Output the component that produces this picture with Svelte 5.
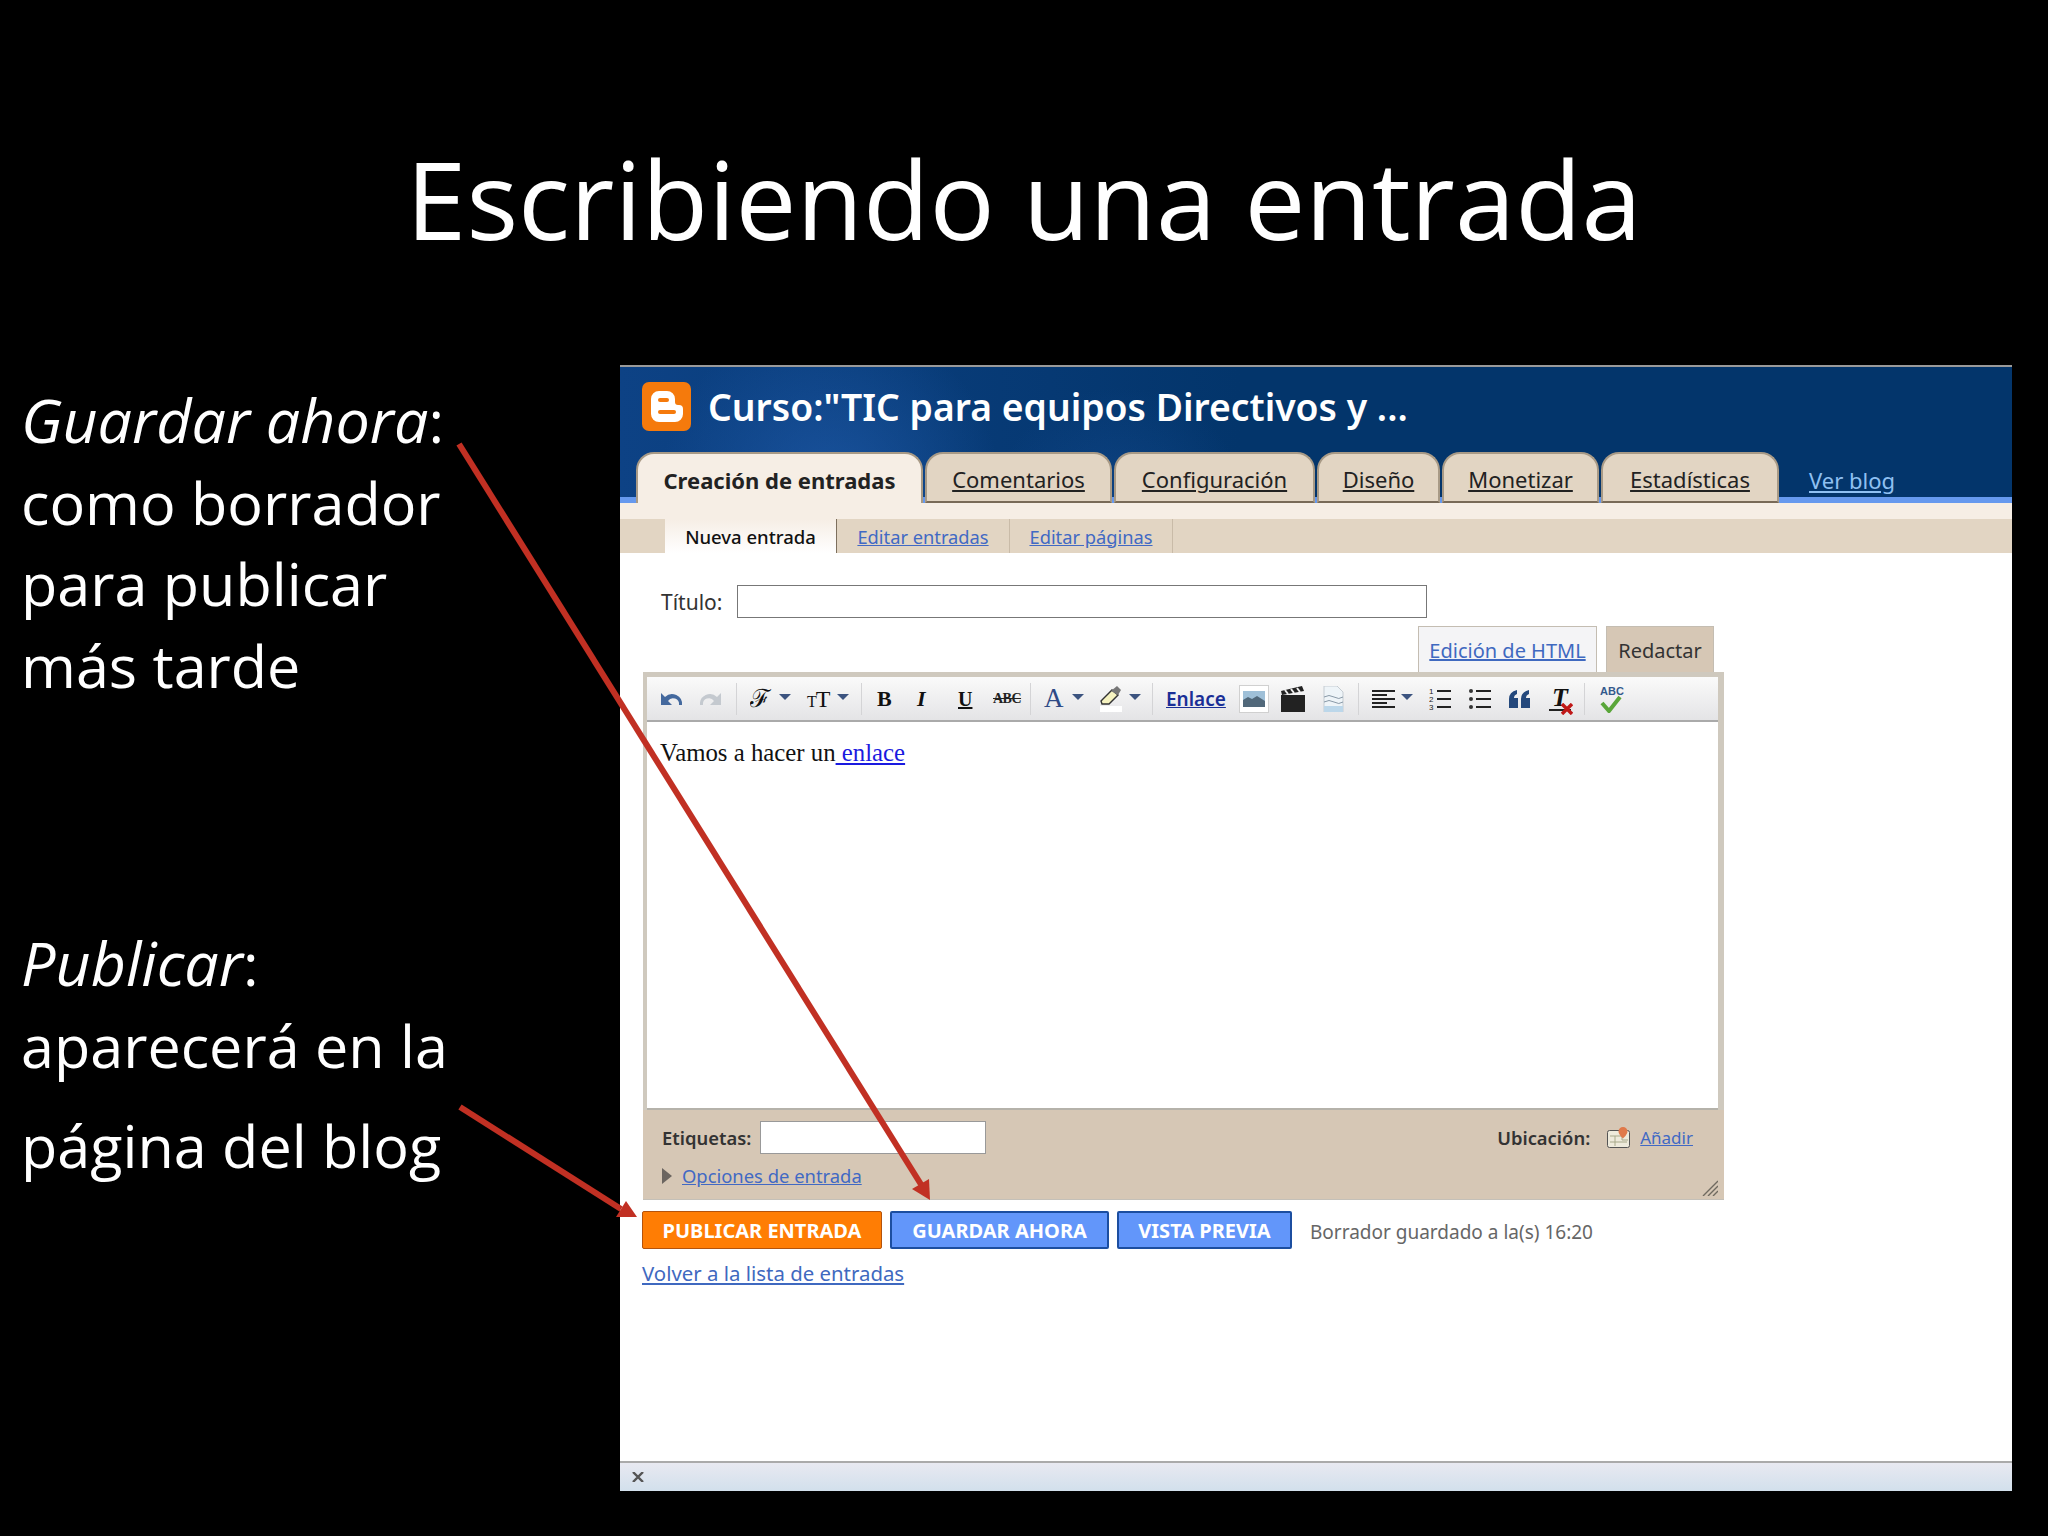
<script>
  const tabs = [
    { label: 'Comentarios', cls: 't-com' },
    { label: 'Configuración', cls: 't-conf' },
    { label: 'Diseño', cls: 't-dis' },
    { label: 'Monetizar', cls: 't-mon' },
    { label: 'Estadísticas', cls: 't-est' }
  ]
</script>

<div class="slide">
  <h1>Escribiendo una entrada</h1>

  <div class="main">
    <div class="notes">
      <p class="note"><em>Guardar ahora</em>:<br />como borrador<br />para publicar<br />más tarde</p>
      <p class="note second"><em>Publicar</em>:<br />aparecerá en la<br /><span class="last">página del blog</span></p>
    </div>

    <div class="window">
      <header class="head">
        <div class="brand">
          <svg class="logo" viewBox="0 0 49 49">
            <rect width="49" height="49" rx="7" fill="#f57a0c" />
            <path d="M17 9h8a8 8 0 0 1 8 8v3a3 3 0 0 0 3 3h1a4 4 0 0 1 4 4v5a8 8 0 0 1-8 8H17a8 8 0 0 1-8-8V17a8 8 0 0 1 8-8z" fill="#fff" />
            <rect x="16" y="16" width="11" height="4" rx="2" fill="#f57a0c" />
            <rect x="16" y="28" width="18" height="4" rx="2" fill="#f57a0c" />
          </svg>
          <span class="blog-name">Curso:"TIC para equipos Directivos y ...</span>
        </div>
        <nav class="tabs">
          <span class="tab active">Creación de entradas</span>
          {#each tabs as t}
            <a class="tab {t.cls}" href="#top">{t.label}</a>
          {/each}
          <a class="view" href="#top">Ver blog</a>
        </nav>
      </header>

      <div class="band"></div>
      <div class="subnav">
        <span class="sub current">Nueva entrada</span>
        <span class="sub s-ent"><a href="#top">Editar entradas</a></span>
        <span class="sub s-pag"><a href="#top">Editar páginas</a></span>
      </div>

      <div class="content">
        <div class="title-row">
          <label for="titulo">Título:</label>
          <input id="titulo" type="text" />
        </div>

        <div class="mode-row">
          <span class="mode html"><a href="#top">Edición de HTML</a></span>
          <span class="mode compose">Redactar</span>
        </div>

        <div class="editor">
          <div class="toolbar">
            <svg class="ic undo" viewBox="0 0 23 14"><path d="M1 1v12h11l-4-4a6 6 0 0 1 11 4h3A10 10 0 0 0 5 5z" fill="#44699e" /></svg>
            <svg class="ic redo" viewBox="0 0 22 14"><path d="M21 1v12H10l4-4A6 6 0 0 0 3 13H0A10 10 0 0 1 17 5z" fill="#c4c9cf" /></svg>
            <i class="sep s1"></i>
            <span class="glyph font">ℱ</span>
            <i class="caret c1"></i>
            <span class="glyph size"><small>T</small>T</span>
            <i class="caret c2"></i>
            <i class="sep s2"></i>
            <b class="glyph bold">B</b>
            <span class="glyph ital">I</span>
            <span class="glyph under">U</span>
            <span class="glyph strike">ABC</span>
            <i class="sep s3"></i>
            <span class="glyph color">A</span>
            <i class="caret c3"></i>
            <svg class="ic marker" viewBox="0 0 22 26">
              <path d="M1 15 12 4l6 5-9 9H2z" fill="#f6f3c0" stroke="#333" stroke-width="1.4" />
              <path d="M11 5 17 0l4 4-3 5z" fill="#777" />
              <rect y="20" width="22" height="6" fill="#fff" />
            </svg>
            <i class="caret c4"></i>
            <i class="sep s4"></i>
            <a class="tb-link" href="#top">Enlace</a>
            <span class="img-btn">
              <svg viewBox="0 0 22 16"><rect width="22" height="16" fill="#9fc0d8" /><path d="M0 16V9l5-3 4 2 5-3 8 5v6z" fill="#51687a" /></svg>
            </span>
            <svg class="ic clap" viewBox="0 0 24 26">
              <path d="M0 9h24v17H0z" fill="#222" />
              <path d="M0 5 21 0l2 5L1 9z" fill="#222" />
              <path d="M4 4l3 4M10 3l3 4M16 2l3 4" stroke="#eee" stroke-width="2" />
            </svg>
            <svg class="ic doc" viewBox="0 0 21 26">
              <path d="M1 0h13l6 6v20H1z" fill="#eef4f8" stroke="#c5ccd2" />
              <path d="M1 11q5-3 10 0t9 0M1 16q5-3 10 0t9 0" stroke="#8a9aa8" fill="none" />
              <path d="M1 20h19v6H1z" fill="#bcd7ea" />
            </svg>
            <i class="sep s5"></i>
            <svg class="ic align" viewBox="0 0 23 18"><path d="M0 1h23M0 5h15M0 9h23M0 13h15M0 17h23" stroke="#222" stroke-width="2" /></svg>
            <i class="caret c5"></i>
            <svg class="ic nums" viewBox="0 0 22 24">
              <path d="M8 4h14M8 12h14M8 20h14" stroke="#222" stroke-width="2" />
              <text x="0" y="7" class="mini">1</text><text x="0" y="15" class="mini">2</text><text x="0" y="23" class="mini">3</text>
            </svg>
            <svg class="ic bullets" viewBox="0 0 22 24">
              <path d="M7 4h15M7 12h15M7 20h15" stroke="#222" stroke-width="2" />
              <circle cx="2" cy="4" r="2" fill="#333" /><circle cx="2" cy="12" r="2" fill="#333" /><circle cx="2" cy="20" r="2" fill="#333" />
            </svg>
            <svg class="ic quote" viewBox="0 0 21 18">
              <path d="M0 18V9q0-7 8-9v4q-3 1-3 4h4v10zM12 18V9q0-7 8-9v4q-3 1-3 4h4v10z" fill="#24487c" />
            </svg>
            <span class="clear"><span class="glyph tx">T</span>
              <svg viewBox="0 0 12 12"><path d="M1 1l10 10M11 1 1 11" stroke="#c01818" stroke-width="3.4" /></svg>
            </span>
            <i class="sep s6"></i>
            <span class="spell">ABC
              <svg viewBox="0 0 22 18"><path d="M2 8l7 8L20 2" fill="none" stroke="#5aa63a" stroke-width="4" /></svg>
            </span>
          </div>

          <div class="area">Vamos a hacer un<a href="#top">{' enlace'}</a></div>

          <div class="meta">
            <div class="meta-top">
              <span class="lbl">Etiquetas:</span>
              <input type="text" aria-label="Etiquetas" />
              <span class="lbl place">Ubicación:</span>
              <svg class="map" viewBox="0 0 23 21">
                <rect x="0.5" y="3.5" width="22" height="17" rx="2" fill="#eeeadb" stroke="#555" />
                <path d="M3 9h12v4h6M8 9v10M3 15h17" stroke="#a8a98a" fill="none" />
                <path d="M16 0a4.500 4.500 0 0 1 4.500 4.500c0 3-4.500 7-4.500 7s-4.500-4-4.500-7A4.500 4.500 0 0 1 16 0z" fill="#e0794a" />
              </svg>
              <a class="add" href="#top">Añadir</a>
            </div>
            <div class="meta-bottom">
              <i class="tri"></i>
              <a href="#top">Opciones de entrada</a>
            </div>
            <svg class="grip" viewBox="0 0 16 16"><path d="M1 16 16 1M6 16 16 6M11 16l5-5" stroke="#6f6a60" stroke-width="1.400" /></svg>
          </div>
        </div>

        <div class="actions">
          <button class="btn publish">PUBLICAR ENTRADA</button>
          <button class="btn save">GUARDAR AHORA</button>
          <button class="btn preview">VISTA PREVIA</button>
          <span class="saved">Borrador guardado a la(s) 16:20</span>
        </div>
        <a class="back" href="#top">Volver a la lista de entradas</a>
      </div>

      <footer class="status">
        <svg viewBox="0 0 12 10"><path d="M1 0l10 10M11 0 1 10" stroke="#555" stroke-width="2.400" /></svg>
      </footer>
    </div>
  </div>

  <svg class="arrows" viewBox="0 0 2048 1536">
    <path d="M459 444 922 1186" stroke="#c13023" stroke-width="6" />
    <path d="M930 1200 912 1189 929 1179z" fill="#c13023" />
    <path d="M460 1107 621 1209" stroke="#c13023" stroke-width="6" />
    <path d="M637 1217 616 1217 626 1201z" fill="#c13023" />
  </svg>
</div>

<style>
  :global(body) {
    margin: 0;
    background: #000;
  }

  .slide {
    position: relative;
    width: 2048px;
    height: 1536px;
    overflow: hidden;
    background: #000;
    color: #fff;
    font-family: "Open Sans", Lato, sans-serif;
  }

  h1 {
    margin: 0;
    height: 365px;
    padding: 125px 0 0 0;
    box-sizing: border-box;
    text-align: center;
    font-size: 108.500px;
    font-weight: 400;
    line-height: 146px;
    white-space: nowrap;
  }

  .main {
    display: flex;
  }

  .notes {
    width: 620px;
    padding: 14px 0 0 21px;
    box-sizing: border-box;
    flex: none;
  }

  .note {
    margin: 0;
    font-size: 59.300px;
    line-height: 81.6px;
  }

  .note em {
    font-size: 61px;
  }

  .note.second {
    margin-top: 216px;
  }

  .last {
    display: block;
    margin-top: 18px;
  }

  .window {
    display: flex;
    flex-direction: column;
    width: 1392px;
    height: 1126px;
    background: #fff;
    color: #222;
    font-family: "Noto Sans", sans-serif;
  }

  .head {
    background:
      radial-gradient(circle at 210px 120px, rgba(36, 96, 178, 0.6), rgba(36, 96, 178, 0) 170px),
      radial-gradient(circle at 500px 150px, rgba(36, 96, 178, 0.3), rgba(36, 96, 178, 0) 130px),
      linear-gradient(90deg, #0d4285, #03356b 620px);
    border-top: 2px solid #9a9a9a;
    box-sizing: border-box;
    height: 138px;
  }

  .brand {
    display: flex;
    align-items: center;
    gap: 17px;
    height: 85px;
    padding: 0 0 6px 22px;
    box-sizing: border-box;
  }

  .logo {
    width: 49px;
    height: 49px;
  }

  .blog-name {
    color: #fff;
    font-size: 37.3px;
    font-weight: 600;
    white-space: nowrap;
  }

  .tabs {
    display: flex;
    align-items: stretch;
    height: 51px;
    gap: 2px;
    padding-left: 16px;
    background: linear-gradient(#6699ee, #6699ee) bottom / 100% 6px no-repeat;
  }

  .tab {
    display: flex;
    align-items: center;
    justify-content: center;
    box-sizing: border-box;
    border: 2px solid #a89a86;
    border-bottom-color: #786a58;
    border-radius: 18px 18px 0 0;
    background: #e2d5c3;
    color: #222;
    font-size: 22px;
    padding-top: 3px;
  }

  .tab.active {
    width: 287px;
    background: #f6eee5;
    border-bottom: 0;
    font-weight: 700;
  }

  .t-com { width: 187px; }
  .t-conf { width: 201px; }
  .t-dis { width: 123px; }
  .t-mon { width: 157px; }
  .t-est { width: 178px; }

  .view {
    margin: 13px 0 0 28px;
    color: #8fc0f2;
    font-size: 22px;
  }

  .band {
    height: 16px;
    background: #f6eee5;
  }

  .subnav {
    display: flex;
    height: 34px;
    padding-left: 45px;
    background: #e2d5c3;
    font-size: 18.3px;
  }

  .sub {
    display: flex;
    align-items: center;
    justify-content: center;
    box-sizing: border-box;
    width: 173px;
    border-right: 1px solid #c9bba8;
  }

  .sub a {
    color: #4169c4;
  }

  .sub.current {
    width: 172px;
    background: linear-gradient(#f6eee5, #fff);
    border-right-color: #7d6f5d;
    color: #111;
    font-size: 18.5px;
    font-weight: 500;
  }

  .s-pag { width: 163px; }

  .content {
    padding: 32px 0 0 23px;
  }

  .title-row {
    display: flex;
    align-items: center;
    height: 33px;
  }

  .title-row label {
    width: 94px;
    padding-left: 18px;
    box-sizing: border-box;
    font-size: 21px;
    color: #333;
  }

  .title-row input {
    width: 690px;
    height: 33px;
    box-sizing: border-box;
    border: 1px solid #777;
    background: #fff;
  }

  .mode-row {
    display: flex;
    justify-content: flex-end;
    gap: 9px;
    width: 1081px;
    height: 47px;
    margin-top: 8px;
    padding-right: 10px;
    box-sizing: border-box;
  }

  .mode {
    display: flex;
    align-items: center;
    justify-content: center;
    box-sizing: border-box;
    border: 1px solid #c4bdb2;
    border-bottom: 0;
    font-size: 20px;
    padding-top: 1px;
  }

  .mode.html {
    width: 179px;
    background: #f4f4f6;
  }

  .mode.html a {
    color: #3f69c0;
  }

  .mode.compose {
    width: 108px;
    background: #d6c7b5;
    color: #333;
  }

  .editor {
    position: relative;
    width: 1081px;
    margin-top: -1px;
    padding: 5px 6px 0 4px;
    box-sizing: border-box;
    background: #cfc9be;
  }

  .toolbar {
    display: flex;
    align-items: center;
    height: 45px;
    box-sizing: border-box;
    background: linear-gradient(#fafafa, #e4e4e6);
    border-bottom: 2px solid #aaa;
    color: #111;
  }

  .ic { flex: none; display: block; }

  .sep {
    flex: none;
    width: 1px;
    height: 32px;
    background: #d4d4d6;
  }

  .caret {
    flex: none;
    width: 0;
    height: 0;
    border-left: 6px solid transparent;
    border-right: 6px solid transparent;
    border-top: 6px solid #3c5480;
    margin-top: -4px;
  }

  .glyph {
    flex: none;
    font-family: "Liberation Serif", serif;
    line-height: 1;
  }

  .undo { width: 23px; height: 14px; margin-left: 13px; }
  .redo { width: 22px; height: 14px; margin-left: 17px; }
  .s1 { margin-left: 14px; }
  .font { width: 22px; margin-left: 13px; font-size: 25px; overflow: hidden; }
  .c1 { margin-left: 7px; }
  .size { width: 23px; margin-left: 16px; font-size: 24px; letter-spacing: -1px; }
  .size small { font-size: 16px; }
  .c2 { margin-left: 7px; }
  .s2 { margin-left: 12px; }
  .bold { width: 15px; margin-left: 15px; font-size: 22px; }
  .ital { width: 15px; margin-left: 25px; font-size: 22px; font-weight: 700; font-style: italic; }
  .under { width: 14px; margin-left: 26px; font-size: 20px; font-weight: 700; text-decoration: underline; }
  .strike { width: 26px; margin-left: 21px; font-size: 14px; font-weight: 700; text-decoration: line-through; color: #222; letter-spacing: -0.5px; }
  .s3 { margin-left: 11px; }
  .color { width: 20px; margin-left: 13px; font-size: 27px; color: #2e4a86; }
  .c3 { margin-left: 8px; }
  .marker { width: 22px; height: 26px; margin-left: 16px; }
  .c4 { margin-left: 7px; }
  .s4 { margin-left: 11px; }

  .tb-link {
    flex: none;
    width: 60px;
    margin-left: 13px;
    color: #1a2e96;
    font-size: 19px;
    font-weight: 600;
    white-space: nowrap;
  }

  .img-btn {
    flex: none;
    display: flex;
    align-items: center;
    justify-content: center;
    box-sizing: border-box;
    width: 30px;
    height: 28px;
    margin-left: 13px;
    border: 1px solid #d0d0d0;
    background: #fff;
  }

  .img-btn svg { width: 22px; height: 16px; }

  .clap { width: 24px; height: 26px; margin-left: 12px; }
  .doc { width: 21px; height: 26px; margin-left: 18px; }
  .s5 { margin-left: 14px; }
  .align { width: 23px; height: 18px; margin-left: 13px; }
  .c5 { margin-left: 6px; }
  .nums { width: 22px; height: 24px; margin-left: 16px; }
  .mini { font: 8px "Liberation Sans", sans-serif; fill: #222; }
  .bullets { width: 22px; height: 24px; margin-left: 18px; }
  .quote { width: 21px; height: 18px; margin-left: 18px; }

  .clear {
    position: relative;
    flex: none;
    width: 22px;
    height: 28px;
    margin-left: 19px;
  }

  .tx {
    display: block;
    font-size: 26px;
    font-weight: 700;
    font-style: italic;
    text-align: center;
    border-bottom: 2px solid #222;
    height: 24px;
  }

  .clear svg {
    position: absolute;
    right: -2px;
    bottom: -2px;
    width: 12px;
    height: 12px;
  }

  .s6 { margin-left: 13px; }

  .spell {
    position: relative;
    flex: none;
    width: 22px;
    height: 28px;
    margin-left: 15px;
    color: #335a8c;
    font: 700 11px "Liberation Sans", sans-serif;
  }

  .spell svg {
    position: absolute;
    left: 0;
    bottom: 0;
    width: 22px;
    height: 18px;
  }

  .area {
    height: 388px;
    box-sizing: border-box;
    padding: 15px 0 0 13px;
    background: #fff;
    border-bottom: 2px solid #b5b2aa;
    color: #111;
    font-family: "Liberation Serif", serif;
    font-size: 24.800px;
    line-height: 32px;
  }

  .area a { color: #1a1ae0; }

  .meta {
    position: relative;
    height: 90px;
    margin: 0 -6px 0 -4px;
    padding: 11px 0 0 19px;
    box-sizing: border-box;
    background: #d6c7b5;
    border-bottom: 1px solid #c4c0b8;
    font-size: 18.400px;
  }

  .meta-top {
    display: flex;
    align-items: center;
    height: 33px;
  }

  .lbl {
    color: #333;
    font-weight: 600;
  }

  .meta input {
    width: 226px;
    height: 33px;
    margin-left: 9px;
    box-sizing: border-box;
    border: 1px solid #999;
    background: #fff;
  }

  .lbl.place {
    margin-left: auto;
  }

  .map {
    width: 23px;
    height: 21px;
    margin-left: 17px;
  }

  .add {
    margin: 0 31px 0 10px;
    color: #4169c4;
    font-size: 17px;
  }

  .meta-bottom {
    display: flex;
    align-items: center;
    gap: 10px;
    margin-top: 9px;
  }

  .meta-bottom a {
    color: #4169c4;
  }

  .tri {
    width: 0;
    height: 0;
    border-top: 8px solid transparent;
    border-bottom: 8px solid transparent;
    border-left: 10px solid #6b6560;
  }

  .grip {
    position: absolute;
    right: 6px;
    bottom: 3px;
    width: 16px;
    height: 16px;
  }

  .actions {
    display: flex;
    align-items: center;
    height: 38px;
    margin: 11px 0 0 -1px;
  }

  .btn {
    height: 38px;
    padding: 1px 0 0;
    box-sizing: border-box;
    border-radius: 2px;
    color: #fff;
    font-family: "Noto Sans", sans-serif;
    font-size: 20px;
    font-weight: 700;
    white-space: nowrap;
  }

  .publish {
    width: 240px;
    background: #ff7d04;
    border: 1px solid #b4530c;
  }

  .save {
    width: 219px;
    margin-left: 8px;
    background: #6296fa;
    border: 2px solid #1c4ea0;
  }

  .preview {
    width: 175px;
    margin-left: 8px;
    background: #6296fa;
    border: 2px solid #1c4ea0;
  }

  .saved {
    margin: 3px 0 0 18px;
    color: #666;
    font-size: 19px;
  }

  .back {
    display: inline-block;
    margin: 10px 0 0 -1px;
    color: #3f69c0;
    font-size: 20.400px;
  }

  .status {
    display: flex;
    align-items: center;
    height: 30px;
    margin-top: auto;
    padding-left: 12px;
    box-sizing: border-box;
    background: linear-gradient(#e8e9f1, #d2e0ec);
    border-top: 2px solid #aaa;
  }

  .status svg {
    width: 12px;
    height: 10px;
  }

  .arrows {
    position: absolute;
    left: 0;
    top: 0;
    width: 2048px;
    height: 1536px;
    pointer-events: none;
  }
</style>
